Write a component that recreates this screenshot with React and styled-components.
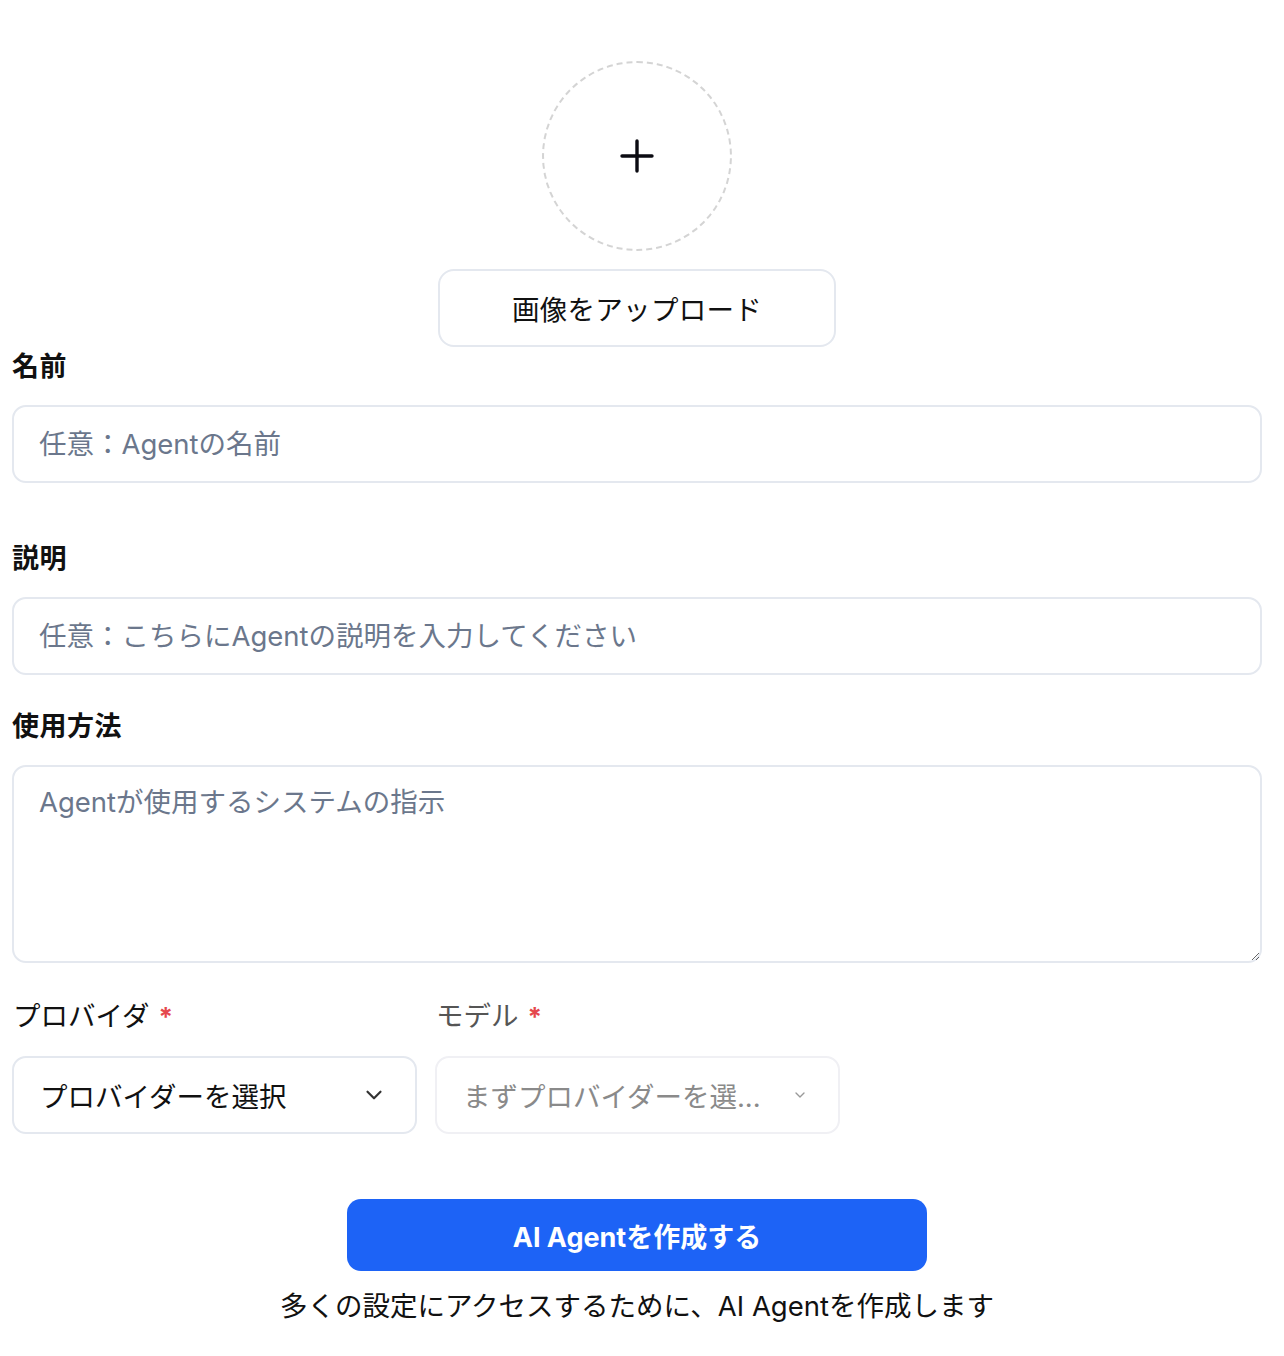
import React from "react";
import styled, { createGlobalStyle } from "styled-components";

const Global = createGlobalStyle`
  body {
    margin: 0;
    background: #ffffff;
    font-family: "Inter", "Noto Sans CJK JP", sans-serif;
    color: #111111;
  }
`;

const App = () => {
  return (
    <>
      <Global />
      <Page>
        <Avatar>
          <svg width="36" height="36" viewBox="0 0 36 36" fill="none">
            <path d="M18 3v30M3 18h30" stroke="#0b0b12" strokeWidth="3.4" strokeLinecap="round" />
          </svg>
        </Avatar>
        <UploadButton>画像をアップロード</UploadButton>

        <Label $top={4}>名前</Label>
        <Input placeholder="任意：Agentの名前" />

        <Label $top={60}>説明</Label>
        <Input placeholder="任意：こちらにAgentの説明を入力してください" />

        <Label $top={36}>使用方法</Label>
        <TextArea placeholder="Agentが使用するシステムの指示" />

        <SelectRow>
          <SelectField>
            <SmallLabel>
              プロバイダ<Star>*</Star>
            </SmallLabel>
            <Select>
              <span>プロバイダーを選択</span>
              <svg width="26" height="26" viewBox="0 0 24 24" fill="none">
                <path d="M6 9l6 6 6-6" stroke="#333" strokeWidth="2" strokeLinecap="round" strokeLinejoin="round" />
              </svg>
            </Select>
          </SelectField>
          <SelectField>
            <SmallLabel $muted>
              モデル<Star>*</Star>
            </SmallLabel>
            <Select $disabled>
              <span>まずプロバイダーを選...</span>
              <svg width="16" height="16" viewBox="0 0 24 24" fill="none">
                <path d="M6 9l6 6 6-6" stroke="#999" strokeWidth="2" strokeLinecap="round" strokeLinejoin="round" />
              </svg>
            </Select>
          </SelectField>
        </SelectRow>

        <CreateButton>AI Agentを作成する</CreateButton>
        <Caption>多くの設定にアクセスするために、AI Agentを作成します</Caption>
      </Page>
    </>
  );
};

export default App;

/* ================= STYLES ================= */

const Page = styled.div`
  width: 1250px;
  margin-left: 12px;
  padding: 61px 0 40px;
  display: flex;
  flex-direction: column;
`;

const Avatar = styled.div`
  align-self: center;
  width: 190px;
  height: 190px;
  border-radius: 50%;
  border: 2px dashed #d4d4d4;
  box-sizing: border-box;
  display: flex;
  align-items: center;
  justify-content: center;
`;

const UploadButton = styled.button`
  align-self: center;
  margin-top: 18px;
  width: 398px;
  height: 78px;
  border: 2px solid #e4e8ef;
  border-radius: 16px;
  background: #fff;
  font-family: "Inter", "Noto Sans CJK JP", sans-serif;
  font-size: 27.5px;
  color: #111;
  letter-spacing: 0.3px;
`;

const Label = styled.div`
  margin-top: ${({ $top }) => $top}px;
  font-size: 27px;
  line-height: 32px;
  font-weight: 700;
  letter-spacing: 0.5px;
  color: #111;
`;

const Input = styled.input`
  margin-top: 22px;
  height: 78px;
  box-sizing: border-box;
  padding: 0 25px;
  border: 2px solid #e4e8ef;
  border-radius: 14px;
  font-family: "Inter", "Noto Sans CJK JP", sans-serif;
  font-size: 27.5px;
  color: #111;
  outline: none;

  &::placeholder {
    color: #6b778c;
  }
`;

const TextArea = styled.textarea`
  margin-top: 22px;
  height: 198px;
  box-sizing: border-box;
  padding: 17px 25px;
  border: 2px solid #e4e8ef;
  border-radius: 14px;
  font-family: "Inter", "Noto Sans CJK JP", sans-serif;
  font-size: 27.5px;
  line-height: 36px;
  color: #111;
  outline: none;
  resize: vertical;

  &::placeholder {
    color: #6b778c;
  }
`;

const SelectRow = styled.div`
  margin-top: 36px;
  display: flex;
  gap: 18px;
`;

const SelectField = styled.div`
  width: 405px;
  display: flex;
  flex-direction: column;
`;

const SmallLabel = styled.div`
  font-size: 27.5px;
  line-height: 34px;
  color: ${({ $muted }) => ($muted ? "#555" : "#111")};
  padding-left: 1px;
`;

const Star = styled.span`
  color: #e5484d;
  font-size: 26px;
  font-weight: 700;
  margin-left: 9px;
`;

const Select = styled.div`
  margin-top: 22px;
  height: 78px;
  box-sizing: border-box;
  padding: 0 ${({ $disabled }) => ($disabled ? "30px" : "28px")} 0 26px;
  border: 2px solid ${({ $disabled }) => ($disabled ? "#f0f0f4" : "#e4e8ef")};
  border-radius: 14px;
  display: flex;
  align-items: center;
  justify-content: space-between;
  font-size: 27.5px;
  color: ${({ $disabled }) => ($disabled ? "#8a8a8a" : "#111")};
`;

const CreateButton = styled.button`
  align-self: center;
  margin-top: 65px;
  width: 580px;
  height: 72px;
  border: none;
  border-radius: 14px;
  background: #1d63f6;
  color: #fff;
  font-family: "Inter", "Noto Sans CJK JP", sans-serif;
  font-size: 27px;
  font-weight: 700;
`;

const Caption = styled.div`
  align-self: center;
  margin-top: 18px;
  font-size: 27.5px;
  line-height: 34px;
  color: #111;
`;
